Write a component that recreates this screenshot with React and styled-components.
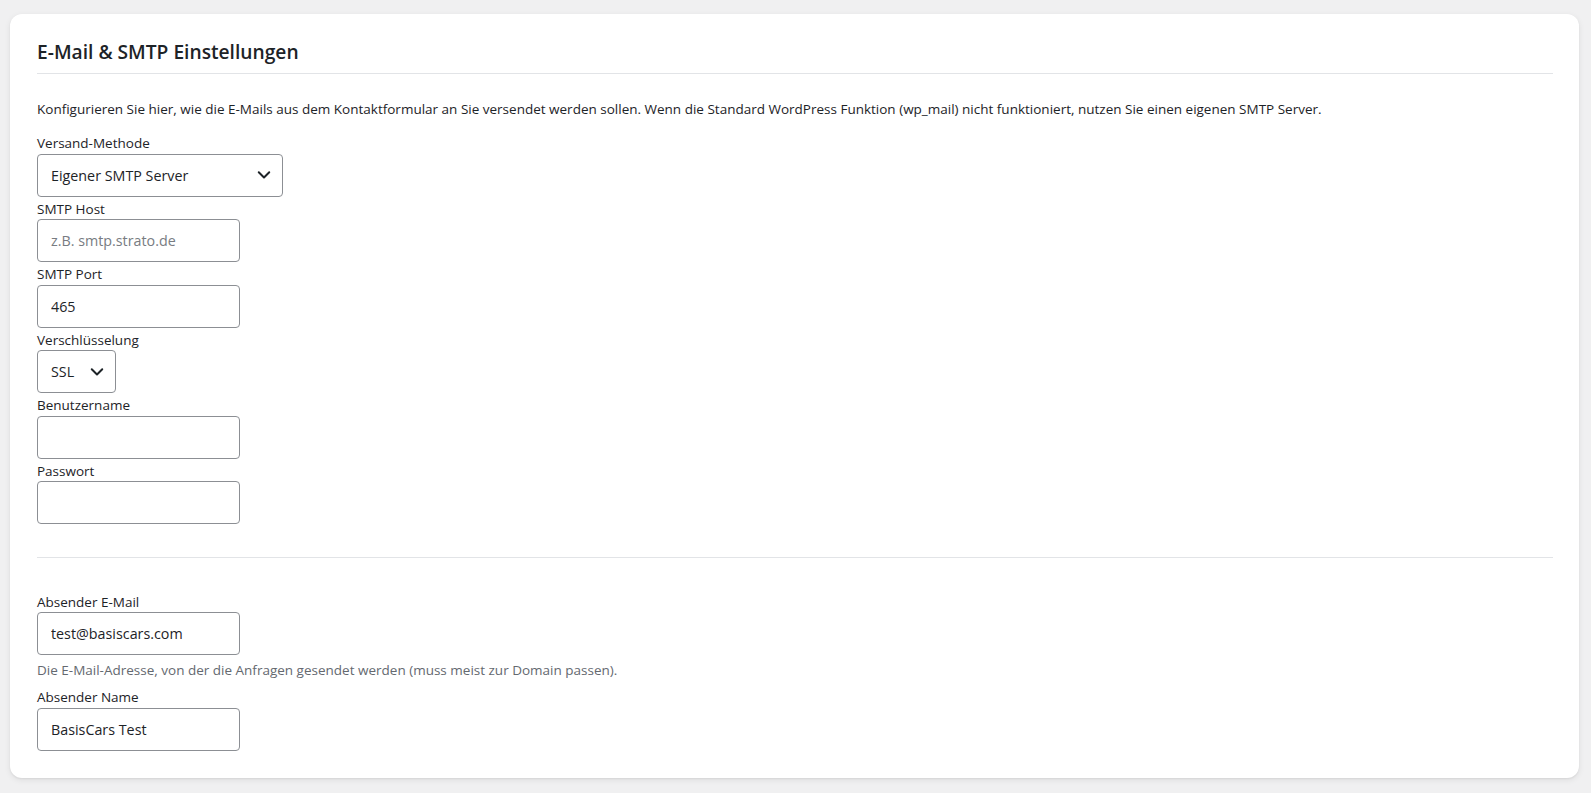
import React from "react";
import styled, { createGlobalStyle } from "styled-components";

const GlobalStyle = createGlobalStyle`
  html, body {
    margin: 0;
    padding: 0;
    background: #f0f0f1;
  }
  body {
    font-family: "Open Sans", "Segoe UI", "Noto Sans", sans-serif;
    color: #1d2327;
    font-size: 13.5px;
  }
  * { box-sizing: border-box; }
`;

const Page = styled.div`
  padding: 14px 12px 15px 10px;
`;

const Card = styled.section`
  background: #ffffff;
  border-radius: 12px;
  box-shadow: 0 1px 2px rgba(0, 0, 0, 0.06), 0 2px 6px rgba(0, 0, 0, 0.08);
  padding: 24px 26px 27px 27px;
`;

const Title = styled.h2`
  margin: 0;
  font-size: 19.2px;
  font-weight: 600;
  line-height: 28px;
  color: #1d2327;
  padding-bottom: 7px;
  border-bottom: 1px solid #e2e4e7;
`;

const Intro = styled.p`
  margin: 25px 0 12px;
  font-size: 13.5px;
  line-height: 20px;
  color: #1d2327;
`;

const Field = styled.div`
  display: flex;
  flex-direction: column;
  align-items: flex-start;
`;

const Label = styled.label`
  display: block;
  font-size: 13.5px;
  line-height: 20.5px;
  padding-top: 2px;
  color: #1d2327;
`;

const TextInput = styled.input`
  width: ${(p) => p.$w || 203}px;
  height: 43px;
  border: 1px solid #8c8f94;
  border-radius: 4px;
  padding: 0 13px;
  font-family: inherit;
  font-size: 14.3px;
  color: #1d2327;
  background: #fff;
  outline: none;
  &::placeholder {
    color: #787c82;
  }
`;

const SelectWrap = styled.div`
  position: relative;
  width: ${(p) => p.$w}px;
`;

const Select = styled.select`
  appearance: none;
  -webkit-appearance: none;
  width: 100%;
  height: 43px;
  border: 1px solid #8c8f94;
  border-radius: 4px;
  padding: 0 30px 0 13px;
  font-family: inherit;
  font-size: 14.3px;
  color: #1d2327;
  background: #fff;
  outline: none;
`;

const Chevron = styled.svg`
  position: absolute;
  right: ${(p) => p.$right}px;
  top: 50%;
  transform: translateY(-50%);
  width: 16px;
  height: 16px;
  pointer-events: none;
`;

const Separator = styled.hr`
  border: 0;
  border-top: 1px solid #e2e4e7;
  margin: 33px 0 31.5px;
`;

const Hint = styled.p`
  margin: 5px 0;
  font-size: 13.5px;
  line-height: 20px;
  color: #646970;
`;

function ChevronIcon({ right }) {
  return (
    <Chevron $right={right} viewBox="0 0 16 16" fill="none">
      <path d="M2.75 5.25 L8 10.5 L13.25 5.25" stroke="#1d2327" strokeWidth="2" strokeLinecap="round" strokeLinejoin="round" />
    </Chevron>
  );
}

export default function App() {
  return (
    <>
      <GlobalStyle />
      <Page>
        <Card>
          <Title>E-Mail &amp; SMTP Einstellungen</Title>
          <Intro>
            Konfigurieren Sie hier, wie die E-Mails aus dem Kontaktformular an Sie versendet werden sollen. Wenn die Standard WordPress Funktion (wp_mail) nicht funktioniert, nutzen Sie einen eigenen SMTP Server.
          </Intro>

          <Field>
            <Label htmlFor="method">Versand-Methode</Label>
            <SelectWrap $w={246}>
              <Select id="method" defaultValue="smtp">
                <option value="smtp">Eigener SMTP Server</option>
                <option value="wp">WordPress Standard (wp_mail)</option>
              </Select>
              <ChevronIcon right={11} />
            </SelectWrap>
          </Field>

          <Field>
            <Label htmlFor="host">SMTP Host</Label>
            <TextInput id="host" type="text" placeholder="z.B. smtp.strato.de" />
          </Field>

          <Field>
            <Label htmlFor="port">SMTP Port</Label>
            <TextInput id="port" type="text" defaultValue="465" />
          </Field>

          <Field>
            <Label htmlFor="enc">Verschlüsselung</Label>
            <SelectWrap $w={79}>
              <Select id="enc" defaultValue="ssl">
                <option value="ssl">SSL</option>
                <option value="tls">TLS</option>
              </Select>
              <ChevronIcon right={11} />
            </SelectWrap>
          </Field>

          <Field>
            <Label htmlFor="user">Benutzername</Label>
            <TextInput id="user" type="text" />
          </Field>

          <Field>
            <Label htmlFor="pass">Passwort</Label>
            <TextInput id="pass" type="password" />
          </Field>

          <Separator />

          <Field>
            <Label htmlFor="from">Absender E-Mail</Label>
            <TextInput id="from" type="email" defaultValue="test@basiscars.com" />
            <Hint>Die E-Mail-Adresse, von der die Anfragen gesendet werden (muss meist zur Domain passen).</Hint>
          </Field>

          <Field>
            <Label htmlFor="name">Absender Name</Label>
            <TextInput id="name" type="text" defaultValue="BasisCars Test" />
          </Field>
        </Card>
      </Page>
    </>
  );
}
